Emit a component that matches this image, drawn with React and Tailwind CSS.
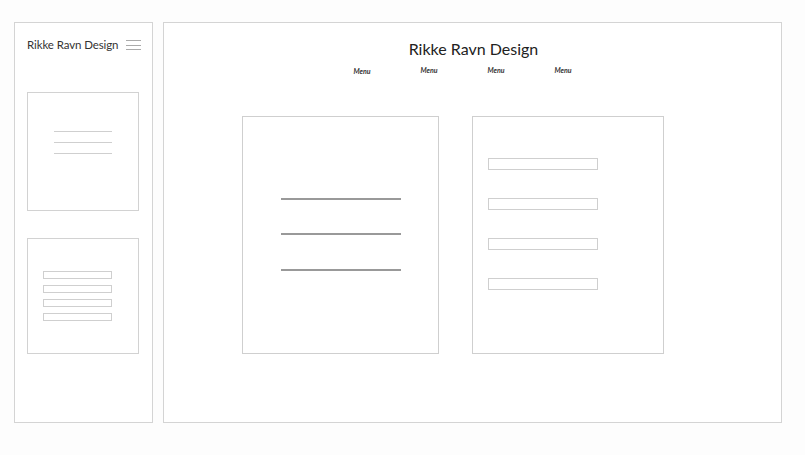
import React from "react";

const font = { fontFamily: "Lato, 'Noto Sans', sans-serif" };

function SideCardLines() {
  return (
    <div className="w-[112px] h-[119px] border border-[#d2d2d2] flex flex-col items-center pt-[38px] gap-[10px]">
      <div className="w-[58px] h-px bg-[#cfcfcf]" />
      <div className="w-[58px] h-px bg-[#cfcfcf]" />
      <div className="w-[58px] h-px bg-[#cfcfcf]" />
    </div>
  );
}

function SideCardFields() {
  return (
    <div className="w-[112px] h-[116px] border border-[#d2d2d2] flex flex-col pl-[15px] pt-[32px] gap-[6px]">
      {[0, 1, 2, 3].map((i) => (
        <div key={i} className="w-[69px] h-[8px] border border-[#cfcfcf]" />
      ))}
    </div>
  );
}

export default function App() {
  return (
    <div className="w-[805px] h-[455px] bg-[#fdfdfd] flex gap-[10px] pl-[14px] pt-[22px]" style={font}>
      {/* mobile frame */}
      <div className="w-[139px] h-[401px] border border-[#d4d4d4] bg-white flex flex-col px-[12px]">
        <div className="flex items-center justify-between mt-[14px] h-[16px]">
          <span className="text-[11.5px] text-[#333] tracking-[-0.1px]">Rikke Ravn Design</span>
          <div className="w-[15px] flex flex-col gap-[3.5px] mr-[-1px]">
            <div className="h-px bg-[#aaa]" />
            <div className="h-px bg-[#aaa]" />
            <div className="h-px bg-[#aaa]" />
          </div>
        </div>
        <div className="mt-[39px]">
          <SideCardLines />
        </div>
        <div className="mt-[27px]">
          <SideCardFields />
        </div>
      </div>

      {/* desktop frame */}
      <div className="w-[619px] h-[401px] border border-[#d4d4d4] bg-white flex flex-col">
        <div className="text-center text-[16px] text-[#222] mt-[15px] leading-[22px] pl-[2px]">Rikke Ravn Design</div>
        <div className="flex ml-[189px] gap-[49px] mt-[5px]">
          {["Menu", "Menu", "Menu", "Menu"].map((m, i) => (
            <span
              key={i}
              className={`text-[7px] font-bold italic text-[#333] w-[18px] text-center ${i === 0 ? "mt-[1px]" : ""}`}
            >
              {m}
            </span>
          ))}
        </div>
        <div className="flex ml-[78px] gap-[33px] mt-[39px]">
          <div className="w-[197px] h-[238px] border border-[#cfcfcf] flex flex-col items-center pt-[81px] gap-[33.5px]">
            <div className="w-[120px] h-[2px] bg-[#999]" />
            <div className="w-[120px] h-[2px] bg-[#999]" />
            <div className="w-[120px] h-[2px] bg-[#999]" />
          </div>
          <div className="w-[192px] h-[238px] border border-[#cfcfcf] flex flex-col pl-[15px] pt-[41px] gap-[28px]">
            {[0, 1, 2, 3].map((i) => (
              <div key={i} className="w-[110px] h-[12px] border border-[#cfcfcf]" />
            ))}
          </div>
        </div>
      </div>
    </div>
  );
}
